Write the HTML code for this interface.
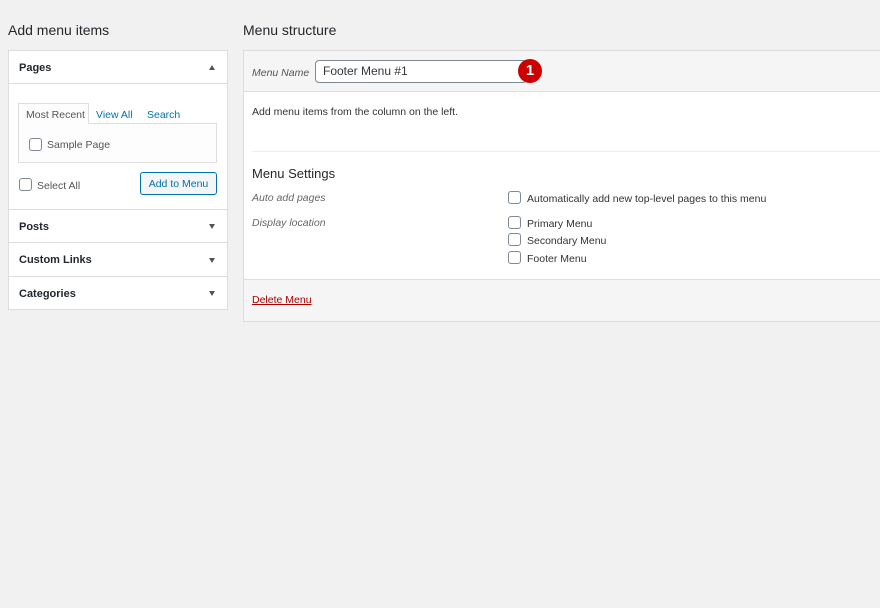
<!DOCTYPE html>
<html><head><style>
*{box-sizing:border-box;margin:0;padding:0}
body{width:880px;height:608px;background:#f1f1f1;font-family:"Liberation Sans",sans-serif;color:#23282d;position:relative;overflow:hidden;font-size:10.5px}
.a{position:absolute}
h2{position:absolute;font-size:14px;font-weight:normal;color:#23282d}
.cb{position:absolute;width:13px;height:13px;border:1px solid #7e8993;border-radius:3px;background:#fff}
.sec{position:absolute;left:8px;width:220px;background:#fff;border:1px solid #ddd;}
.tri{position:absolute;width:0;height:0;border-left:3.5px solid transparent;border-right:3.5px solid transparent}
.lbl{font-size:11px;font-weight:bold;color:#23282d}
</style></head><body>
<h2 style="left:8px;top:22px">Add menu items</h2>
<h2 style="left:243px;top:22px">Menu structure</h2>

<div class="sec" style="top:50px;height:260px"></div>
<div class="a" style="left:9px;top:51px;width:218px;height:33px;border-bottom:1px solid #ddd"></div>
<div class="a lbl" style="left:19px;top:62px">Pages</div>
<div class="tri" style="left:209px;top:65px;border-bottom:5px solid #555"></div>
<div class="a" style="left:18px;top:123px;width:199px;height:40px;border:1px solid #ddd;background:#fdfdfd"></div>
<div class="a" style="left:18px;top:103px;width:71px;height:21px;border:1px solid #ddd;border-bottom:none;background:#fdfdfd"></div>
<div class="a" style="left:26px;top:109px;color:#555">Most Recent</div>
<div class="a" style="left:96px;top:109px;color:#0073aa">View All</div>
<div class="a" style="left:147px;top:109px;color:#0073aa">Search</div>
<div class="cb" style="left:29px;top:138px"></div>
<div class="a" style="left:47px;top:139px;color:#555">Sample Page</div>
<div class="cb" style="left:19px;top:178px"></div>
<div class="a" style="left:37px;top:180px;color:#555">Select All</div>
<div class="a" style="left:140px;top:172px;width:77px;height:23px;border:1px solid #0073aa;border-radius:3px;background:#f3f5f6;color:#0073aa;display:flex;align-items:center;justify-content:center">Add to Menu</div>
<div class="a" style="left:9px;top:209px;width:218px;border-top:1px solid #ddd"></div>
<div class="a lbl" style="left:19px;top:221px">Posts</div>
<div class="tri" style="left:209px;top:224px;border-top:5px solid #555"></div>
<div class="a" style="left:9px;top:242px;width:218px;border-top:1px solid #ddd"></div>
<div class="a lbl" style="left:19px;top:254px">Custom Links</div>
<div class="tri" style="left:209px;top:258px;border-top:5px solid #555"></div>
<div class="a" style="left:9px;top:276px;width:218px;border-top:1px solid #ddd"></div>
<div class="a lbl" style="left:19px;top:288px">Categories</div>
<div class="tri" style="left:209px;top:291px;border-top:5px solid #555"></div>

<div class="a" style="left:243px;top:50px;width:640px;height:272px;border:1px solid #ddd;background:#fff"></div>
<div class="a" style="left:244px;top:51px;width:640px;height:41px;background:#f5f5f5;border-bottom:1px solid #ddd"></div>
<div class="a" style="left:252px;top:67px;font-style:italic;color:#555">Menu Name</div>
<div class="a" style="left:315px;top:60px;width:212px;height:23px;border:1px solid #7e8993;border-radius:4px;background:#fff;padding-left:7px;line-height:21px;font-size:12px;color:#32373c">Footer Menu #1</div>
<div class="a" style="left:518px;top:59px;width:24px;height:24px;border-radius:50%;background:#c00;color:#fff;font-weight:bold;font-size:15px;text-align:center;line-height:24px">1</div>
<div class="a" style="left:252px;top:106px;color:#333">Add menu items from the column on the left.</div>
<div class="a" style="left:252px;top:151px;width:640px;border-top:1px solid #eee"></div>
<div class="a" style="left:252px;top:166px;font-size:13px;color:#23282d">Menu Settings</div>
<div class="a" style="left:252px;top:192px;font-style:italic;color:#666">Auto add pages</div>
<div class="a" style="left:252px;top:217px;font-style:italic;color:#666">Display location</div>
<div class="cb" style="left:508px;top:191px"></div><div class="a" style="left:527px;top:193px;color:#333">Automatically add new top-level pages to this menu</div>
<div class="cb" style="left:508px;top:216px"></div><div class="a" style="left:527px;top:218px;color:#333">Primary Menu</div>
<div class="cb" style="left:508px;top:233px"></div><div class="a" style="left:527px;top:235px;color:#333">Secondary Menu</div>
<div class="cb" style="left:508px;top:251px"></div><div class="a" style="left:527px;top:253px;color:#333">Footer Menu</div>
<div class="a" style="left:244px;top:279px;width:640px;height:42px;background:#f5f5f5;border-top:1px solid #ddd"></div>
<div class="a" style="left:252px;top:294px;color:#a00;text-decoration:underline">Delete Menu</div>
</body></html>
